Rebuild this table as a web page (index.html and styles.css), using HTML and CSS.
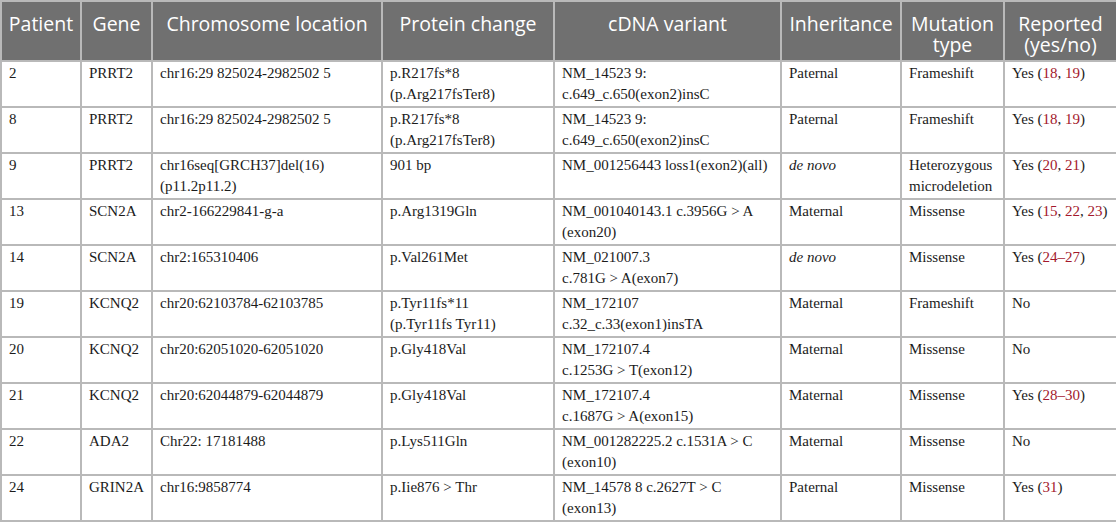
FILE: index.html
```html
<!DOCTYPE html>
<html>
<head>
<meta charset="utf-8">
<link rel="stylesheet" href="styles.css">
</head>
<body>
<table class="vt">
  <colgroup>
    <col class="c-pat"><col class="c-gene"><col class="c-chr"><col class="c-prot"><col class="c-cdna"><col class="c-inh"><col class="c-mut"><col class="c-rep">
  </colgroup>
  <thead>
    <tr>
      <th>Patient</th>
      <th>Gene</th>
      <th>Chromosome location</th>
      <th>Protein change</th>
      <th>cDNA variant</th>
      <th>Inheritance</th>
      <th>Mutation type</th>
      <th>Reported (yes/no)</th>
    </tr>
  </thead>
  <tbody>
    <tr>
      <td>2</td><td>PRRT2</td><td>chr16:29 825024-2982502 5</td>
      <td>p.R217fs*8<br>(p.Arg217fsTer8)</td>
      <td>NM_14523 9:<br>c.649_c.650(exon2)insC</td>
      <td>Paternal</td><td>Frameshift</td>
      <td>Yes (<span class="ref">18</span>, <span class="ref">19</span>)</td>
    </tr>
    <tr>
      <td>8</td><td>PRRT2</td><td>chr16:29 825024-2982502 5</td>
      <td>p.R217fs*8<br>(p.Arg217fsTer8)</td>
      <td>NM_14523 9:<br>c.649_c.650(exon2)insC</td>
      <td>Paternal</td><td>Frameshift</td>
      <td>Yes (<span class="ref">18</span>, <span class="ref">19</span>)</td>
    </tr>
    <tr>
      <td>9</td><td>PRRT2</td><td>chr16seq[GRCH37]del(16)<br>(p11.2p11.2)</td>
      <td>901 bp</td>
      <td>NM_001256443 loss1(exon2)(all)</td>
      <td><em>de novo</em></td><td>Heterozygous<br>microdeletion</td>
      <td>Yes (<span class="ref">20</span>, <span class="ref">21</span>)</td>
    </tr>
    <tr>
      <td>13</td><td>SCN2A</td><td>chr2-166229841-g-a</td>
      <td>p.Arg1319Gln</td>
      <td>NM_001040143.1 c.3956G &gt; A<br>(exon20)</td>
      <td>Maternal</td><td>Missense</td>
      <td>Yes (<span class="ref">15</span>, <span class="ref">22</span>, <span class="ref">23</span>)</td>
    </tr>
    <tr>
      <td>14</td><td>SCN2A</td><td>chr2:165310406</td>
      <td>p.Val261Met</td>
      <td>NM_021007.3<br>c.781G &gt; A(exon7)</td>
      <td><em>de novo</em></td><td>Missense</td>
      <td>Yes (<span class="ref">24–27</span>)</td>
    </tr>
    <tr>
      <td>19</td><td>KCNQ2</td><td>chr20:62103784-62103785</td>
      <td>p.Tyr11fs*11<br>(p.Tyr11fs Tyr11)</td>
      <td>NM_172107<br>c.32_c.33(exon1)insTA</td>
      <td>Maternal</td><td>Frameshift</td>
      <td>No</td>
    </tr>
    <tr>
      <td>20</td><td>KCNQ2</td><td>chr20:62051020-62051020</td>
      <td>p.Gly418Val</td>
      <td>NM_172107.4<br>c.1253G &gt; T(exon12)</td>
      <td>Maternal</td><td>Missense</td>
      <td>No</td>
    </tr>
    <tr>
      <td>21</td><td>KCNQ2</td><td>chr20:62044879-62044879</td>
      <td>p.Gly418Val</td>
      <td>NM_172107.4<br>c.1687G &gt; A(exon15)</td>
      <td>Maternal</td><td>Missense</td>
      <td>Yes (<span class="ref">28–30</span>)</td>
    </tr>
    <tr>
      <td>22</td><td>ADA2</td><td>Chr22: 17181488</td>
      <td>p.Lys511Gln</td>
      <td>NM_001282225.2 c.1531A &gt; C<br>(exon10)</td>
      <td>Maternal</td><td>Missense</td>
      <td>No</td>
    </tr>
    <tr>
      <td>24</td><td>GRIN2A</td><td>chr16:9858774</td>
      <td>p.Iie876 &gt; Thr</td>
      <td>NM_14578 8 c.2627T &gt; C<br>(exon13)</td>
      <td>Paternal</td><td>Missense</td>
      <td>Yes (<span class="ref">31</span>)</td>
    </tr>
  </tbody>
</table>
</body>
</html>
```
FILE: styles.css
```css
html, body {
  margin: 0;
  padding: 0;
  background: #ffffff;
}

.vt {
  width: 1116px;
  table-layout: fixed;
  border-collapse: collapse;
  border: 2px solid #b9b9b9;
  font-family: "Liberation Serif", "Times New Roman", serif;
  font-size: 15px;
  line-height: 21px;
  color: #1b1b1b;
}

.c-pat { width: 80px; }
.c-gene { width: 71px; }
.c-chr { width: 230px; }
.c-prot { width: 172px; }
.c-cdna { width: 227px; }
.c-inh { width: 120px; }
.c-mut { width: 103px; }
.c-rep { width: 113px; }

.vt th {
  background: #707070;
  color: #ffffff;
  font-family: "Open Sans", "Liberation Sans", sans-serif;
  font-weight: 400;
  font-size: 19.5px;
  line-height: 21px;
  text-align: center;
  vertical-align: top;
  padding: 11px 4px 5px;
  border: 2px solid #b9b9b9;
}

.vt td {
  vertical-align: top;
  text-align: left;
  padding: 1px 3px 1px 7px;
  border: 2px solid #b9b9b9;
  white-space: nowrap;
}

.vt em {
  font-style: italic;
}

.ref {
  color: #a3182c;
}
```
